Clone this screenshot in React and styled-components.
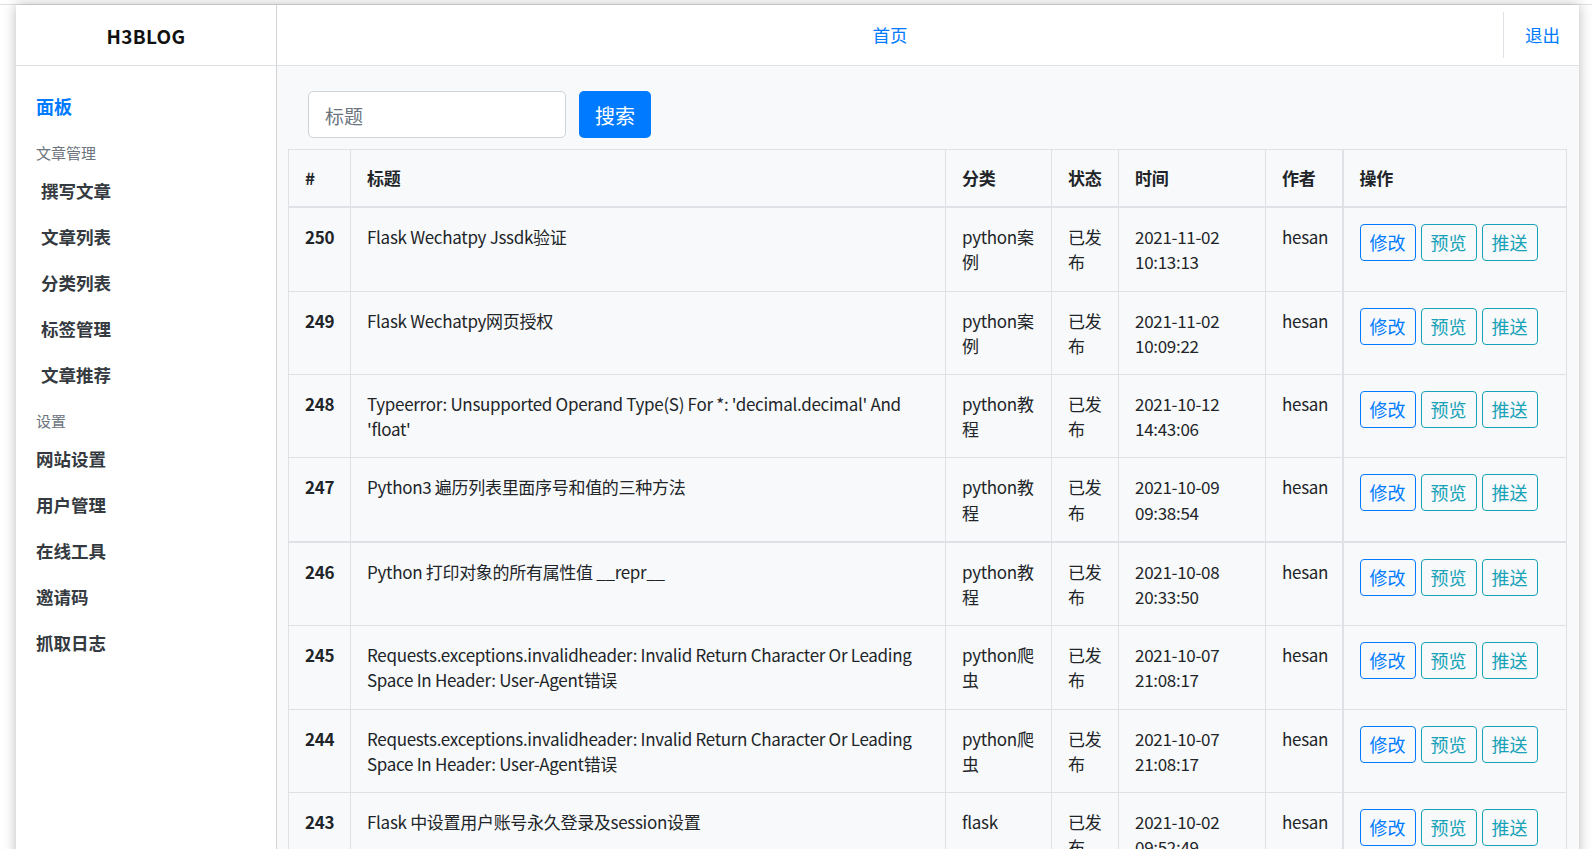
import React from 'react';
import styled, { createGlobalStyle } from 'styled-components';

const GlobalStyle = createGlobalStyle`
  html, body {
    margin: 0;
    padding: 0;
    background-color: #ffffff;
    font-family: "Noto Sans CJK SC", "Noto Sans", sans-serif;
    color: #212529;
  }
  * {
    box-sizing: border-box;
  }
`;

const Frame = styled.div`
  margin-top: 4px;
  border-top: 1px solid #dee2e6;
  padding: 0 13px 0 16px;
`;

const Card = styled.div`
  display: grid;
  grid-template-columns: 261px 1fr;
  grid-template-rows: 61px auto;
  min-height: 850px;
  background-color: #ffffff;
  box-shadow: 0 0 12px rgba(0, 0, 0, 0.28);
`;

const Brand = styled.div`
  display: flex;
  justify-content: center;
  align-items: center;
  border-right: 1px solid #d4d4d4;
  border-bottom: 1px solid #dee2e6;
  font-size: 19px;
  font-weight: 700;
  color: #111;
  letter-spacing: 0.3px;
`;

const NavBar = styled.div`
  display: flex;
  align-items: center;
  border-bottom: 1px solid #dee2e6;
`;

const NavCenter = styled.div`
  flex: 1;
  display: flex;
  justify-content: center;
  padding-bottom: 2px;
`;

const NavLink = styled.a`
  color: #007bff;
  font-size: 17.5px;
  text-decoration: none;
  cursor: pointer;
`;

const NavDivider = styled.div`
  width: 1px;
  height: 46px;
  background-color: #dee2e6;
`;

const NavRight = styled.div`
  padding: 0 19px 2px 21px;
`;

const Sidebar = styled.nav`
  border-right: 1px solid #d4d4d4;
  padding: 17px 0 0 20px;
`;

const MenuItem = styled.a`
  display: flex;
  align-items: center;
  height: 46px;
  padding-left: ${(p) => (p.$indent ? '5px' : '0')};
  font-size: ${(p) => (p.$active ? '18px' : '17.5px')};
  font-weight: 700;
  color: ${(p) => (p.$active ? '#007bff' : '#343a40')};
  text-decoration: none;
  cursor: pointer;
`;

const MenuLabel = styled.div`
  display: flex;
  align-items: flex-end;
  height: 38px;
  padding-bottom: 4px;
  font-size: 15px;
  line-height: 20px;
  color: #6c757d;
`;

const Main = styled.main`
  background-color: #f8f9fa;
  padding: 25px 12px 0 11px;
`;

const SearchForm = styled.form`
  display: flex;
  gap: 13px;
  margin-left: 20px;
`;

const SearchInput = styled.input`
  width: 258px;
  height: 47px;
  padding: 2px 16px 0;
  border: 1px solid #ced4da;
  border-radius: 5px;
  background-color: #ffffff;
  font-family: inherit;
  font-size: 19px;
  color: #495057;
  outline: none;

  &::placeholder {
    color: #6c757d;
  }
`;

const SearchButton = styled.button`
  width: 72px;
  height: 47px;
  padding: 2px 0 0;
  border: none;
  border-radius: 5px;
  background-color: #007bff;
  color: #ffffff;
  font-family: inherit;
  font-size: 20px;
  cursor: pointer;
`;

const Table = styled.table`
  width: 100%;
  margin-top: 11px;
  border-collapse: collapse;
  table-layout: fixed;
  font-size: 17px;
  line-height: 25.2px;
  letter-spacing: -0.3px;
  color: #212529;
`;

const Th = styled.th`
  padding: 15px 16px 16px;
  text-align: left;
  font-weight: 700;
  border: 1px solid #dee2e6;
  border-bottom-width: 2px;
  border-left-width: ${(p) => (p.$thick ? '2px' : '1px')};
`;

const Tr = styled.tr`
  border-top: ${(p) => (p.$thick ? '2px' : '1px')} solid #dee2e6;
`;

const Td = styled.td`
  padding: 16px;
  vertical-align: top;
  border: 1px solid #dee2e6;
  border-left-width: ${(p) => (p.$thick ? '2px' : '1px')};
  font-weight: ${(p) => (p.$bold ? 700 : 400)};
`;

const Actions = styled.div`
  display: flex;
  gap: 5px;
  height: 48px;
`;

const OutlineButton = styled.button`
  height: 37px;
  padding: 0 9px;
  border: 1px solid ${(p) => p.$color};
  border-radius: 4px;
  background: transparent;
  color: ${(p) => p.$color};
  font-family: inherit;
  font-size: 18px;
  line-height: 35px;
  cursor: pointer;
`;

const posts = [
  { id: 250, title: 'Flask Wechatpy Jssdk验证', cat: 'python案例', date: '2021-11-02', time: '10:13:13' },
  { id: 249, title: 'Flask Wechatpy网页授权', cat: 'python案例', date: '2021-11-02', time: '10:09:22' },
  { id: 248, title: "Typeerror: Unsupported Operand Type(S) For *: 'decimal.decimal' And 'float'", cat: 'python教程', date: '2021-10-12', time: '14:43:06' },
  { id: 247, title: 'Python3 遍历列表里面序号和值的三种方法', cat: 'python教程', date: '2021-10-09', time: '09:38:54' },
  { id: 246, title: 'Python 打印对象的所有属性值 __repr__', cat: 'python教程', date: '2021-10-08', time: '20:33:50', thick: true },
  { id: 245, title: 'Requests.exceptions.invalidheader: Invalid Return Character Or Leading Space In Header: User-Agent错误', cat: 'python爬虫', date: '2021-10-07', time: '21:08:17' },
  { id: 244, title: 'Requests.exceptions.invalidheader: Invalid Return Character Or Leading Space In Header: User-Agent错误', cat: 'python爬虫', date: '2021-10-07', time: '21:08:17' },
  { id: 243, title: 'Flask 中设置用户账号永久登录及session设置', cat: 'flask', date: '2021-10-02', time: '09:52:49' },
];

const App = () => {
  return (
    <Frame>
      <GlobalStyle />
      <Card>
        <Brand>H3BLOG</Brand>
        <NavBar>
          <NavCenter>
            <NavLink>首页</NavLink>
          </NavCenter>
          <NavDivider />
          <NavRight>
            <NavLink>退出</NavLink>
          </NavRight>
        </NavBar>

        <Sidebar>
          <MenuItem $active>面板</MenuItem>
          <MenuLabel>文章管理</MenuLabel>
          <MenuItem $indent>撰写文章</MenuItem>
          <MenuItem $indent>文章列表</MenuItem>
          <MenuItem $indent>分类列表</MenuItem>
          <MenuItem $indent>标签管理</MenuItem>
          <MenuItem $indent>文章推荐</MenuItem>
          <MenuLabel>设置</MenuLabel>
          <MenuItem>网站设置</MenuItem>
          <MenuItem>用户管理</MenuItem>
          <MenuItem>在线工具</MenuItem>
          <MenuItem>邀请码</MenuItem>
          <MenuItem>抓取日志</MenuItem>
        </Sidebar>

        <Main>
          <SearchForm onSubmit={(e) => e.preventDefault()}>
            <SearchInput placeholder="标题" />
            <SearchButton type="submit">搜索</SearchButton>
          </SearchForm>

          <Table>
            <colgroup>
              <col style={{ width: 62 }} />
              <col style={{ width: 595 }} />
              <col style={{ width: 106 }} />
              <col style={{ width: 67 }} />
              <col style={{ width: 147 }} />
              <col style={{ width: 77 }} />
              <col />
            </colgroup>
            <thead>
              <tr>
                <Th>#</Th>
                <Th>标题</Th>
                <Th>分类</Th>
                <Th>状态</Th>
                <Th>时间</Th>
                <Th>作者</Th>
                <Th $thick>操作</Th>
              </tr>
            </thead>
            <tbody>
              {posts.map((p) => (
                <Tr key={p.id} $thick={p.thick}>
                  <Td $bold>{p.id}</Td>
                  <Td>{p.title}</Td>
                  <Td>{p.cat}</Td>
                  <Td>已发布</Td>
                  <Td>
                    {p.date} {p.time}
                  </Td>
                  <Td>hesan</Td>
                  <Td $thick>
                    <Actions>
                      <OutlineButton $color="#007bff">修改</OutlineButton>
                      <OutlineButton $color="#17a2b8">预览</OutlineButton>
                      <OutlineButton $color="#17a2b8">推送</OutlineButton>
                    </Actions>
                  </Td>
                </Tr>
              ))}
            </tbody>
          </Table>
        </Main>
      </Card>
    </Frame>
  );
};

export default App;
